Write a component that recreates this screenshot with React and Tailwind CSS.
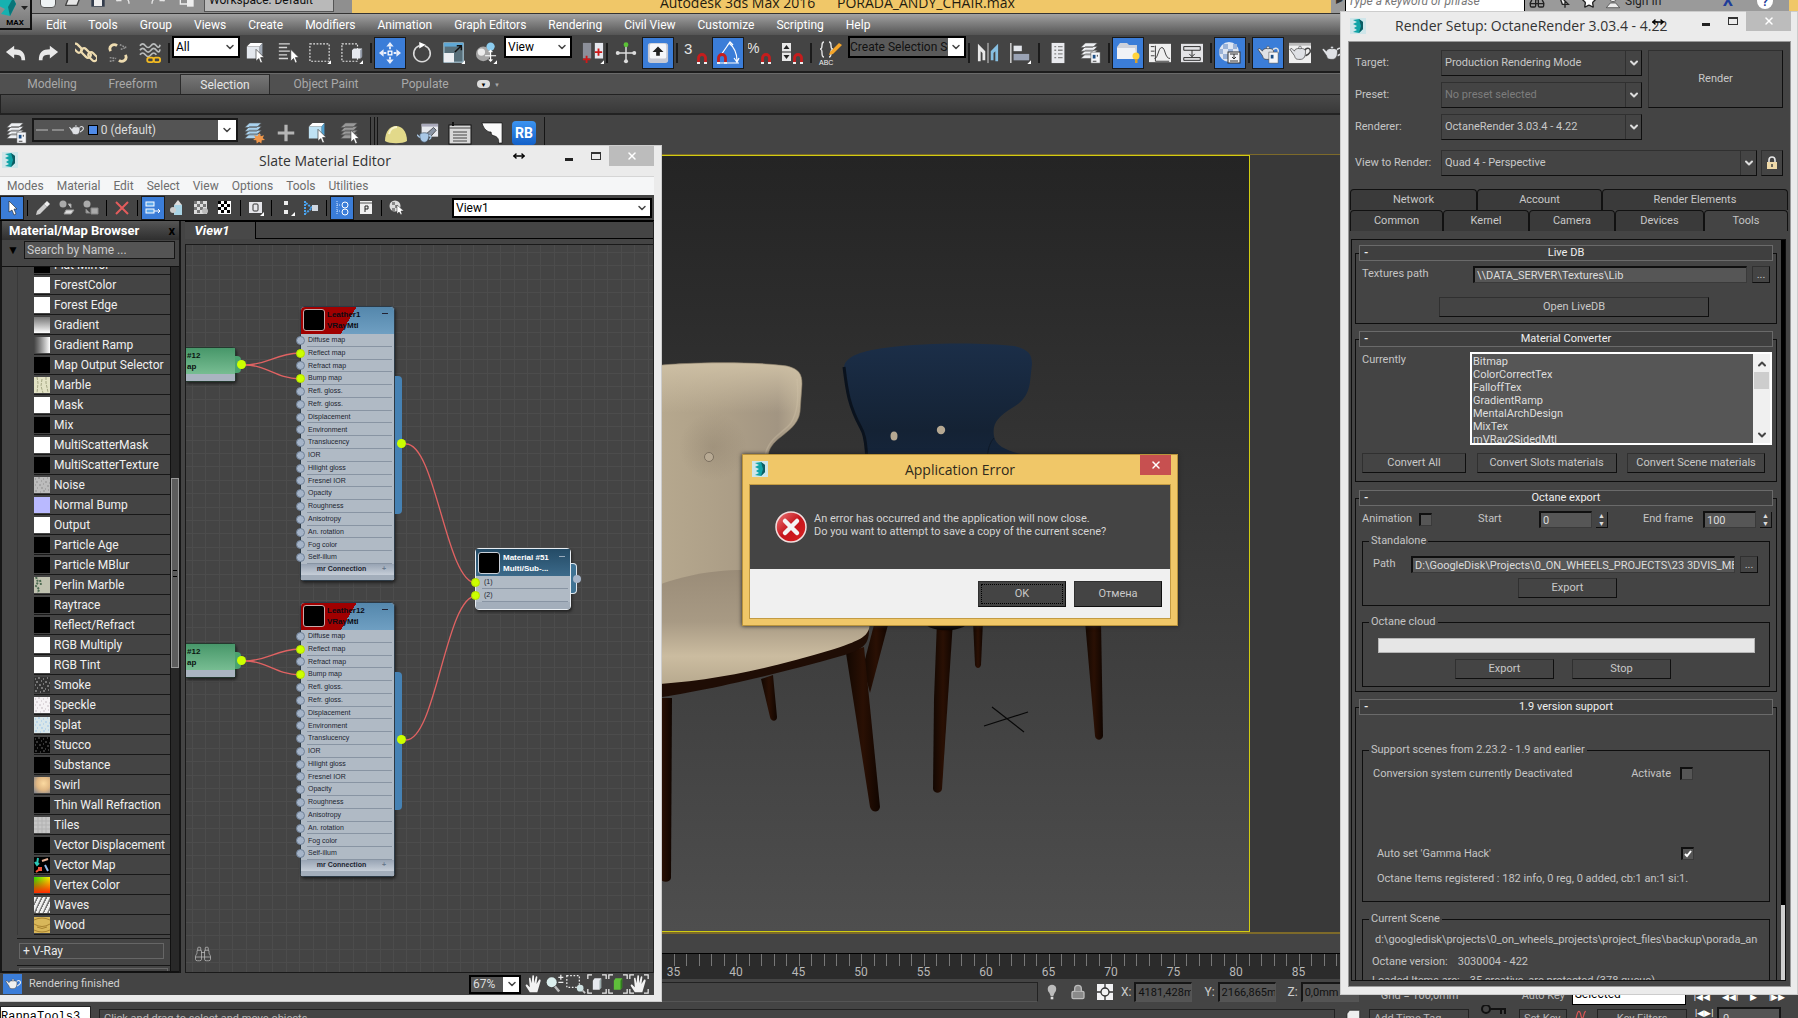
import React from "react";
import { ChevronDown, ChevronUp, Lock, X, Undo, Redo, Binoculars, Star, MoveHorizontal } from "lucide-react";

/* ---------- shared icons ---------- */

const Svg = ({ children, className = "w-[22px] h-[22px]", box = "0 0 24 24" }) => (
  <svg viewBox={box} className={className} fill="none" aria-hidden="true">{children}</svg>
);

const MaxLogo = ({ className = "w-4 h-4" }) => (
  <Svg className={className} box="0 0 16 16">
    <rect width="16" height="16" fill="#cfe6ea" />
    <path d="M3 2l6-1 4 3v7l-4 4-6-1 4-2-3-2 3-2-4-2 4-2z" fill="#11a3a6" />
    <path d="M9 1l4 3v7l-4 4 2-7z" fill="#0b5c63" />
  </Svg>
);

const Arrow = ({ flip }) => (
  <Svg>
    <g transform={flip ? "translate(24 0) scale(-1 1)" : undefined}>
      <path d="M1 11l9-7v4c8 0 12 3 12 12h-4c0-5-2-6-8-6v4z" fill="#e8e8e8" />
    </g>
  </Svg>
);

const Chain = ({ broken }) => (
  <Svg>
    {broken ? (
      <g stroke="#eedcb0" strokeWidth="3">
        <path d="M4 10c-3-5 3-9 7-6M20 14c3 5-3 9-7 6" />
        <path d="M14 3l7 3M15 8l6-2M3 17l7 1M3 21l6-1" stroke="#999" strokeWidth="1.5" strokeDasharray="2 1" />
      </g>
    ) : (
      <g stroke="#eedcb0" strokeWidth="2.4">
        <rect x="-1" y="5" width="11" height="6" rx="3" transform="rotate(45 5 5)" />
        <rect x="6" y="9" width="12" height="6" rx="3" transform="rotate(45 12 12)" />
        <rect x="13" y="13" width="11" height="6" rx="3" transform="rotate(45 19 17)" />
      </g>
    )}
  </Svg>
);

const Waves = () => (
  <Svg>
    <path d="M1 4q3-4 6 0t6 0t6 0t4-1M1 9q3-4 6 0t6 0t6 0t4-1M1 14q3-4 6 0t6 0t6 0" stroke="#b9bcbc" strokeWidth="1.8" />
    <rect x="9" y="17" width="7" height="5" rx="2" stroke="#f3bb22" strokeWidth="2" />
    <rect x="16" y="17" width="7" height="5" rx="2" stroke="#f3bb22" strokeWidth="2" />
  </Svg>
);

const Cursor = ({ x = 10, y = 9 }) => (
  <path transform={`translate(${x} ${y})`} d="M0 0v13l3-3 2 5 2-1-2-5h4z" fill="#fff" stroke="#333" strokeWidth=".7" />
);

const CubeArrow = ({ tint = "#e4e8ee", side = "#9fa8b4" }) => (
  <Svg>
    <path d="M2 5l4-4h13l-3 4z" fill="#fff" />
    <path d="M2 5h14v13H2z" fill={tint} />
    <path d="M16 5l3-4v13l-3 4z" fill={side} />
    <Cursor x={12} y={8} />
  </Svg>
);

const ListArrow = () => (
  <Svg>
    <path d="M2 2h12M2 6h9M2 10h12M2 14h9M2 18h10" stroke="#d5d5d5" strokeWidth="1.5" />
    <Cursor x={15} y={8} />
  </Svg>
);

const Region = ({ cube }) => (
  <Svg>
    <rect x="1" y="2" width={cube ? 17 : 21} height="19" stroke="#e6e6e6" strokeDasharray="2 1.6" strokeWidth="1.3" />
    {cube && <path d="M12 9l2-2h9v9l-2 2h-9z" fill="#e6e9ef" />}
    {cube && <path d="M21 9l2-2v9l-2 2z" fill="#8e96a4" />}
    <path d="M24 20v4h-4z" fill="#fff" />
  </Svg>
);

const MoveIcon = () => (
  <Svg>
    <path d="M12 0l4 5H8zM12 24l4-5H8zM0 12l5-4v8zM24 12l-5-4v8z" fill="#e8eefb" />
    <path d="M11 5h2v3h-2zM11 16h2v3h-2zM5 11h3v2H5zM16 11h3v2h-3z" fill="#e8eefb" />
    <rect x="10" y="10" width="4" height="4" stroke="#fff" strokeWidth="1.4" />
  </Svg>
);

const RotateIcon = () => (
  <Svg>
    <path d="M9 4a9 9 0 1 0 6 0" stroke="#dcdcdc" strokeWidth="1.7" />
    <path d="M9 0l7 3-7 4z" fill="#fff" />
  </Svg>
);

const ScaleIcon = () => (
  <Svg>
    <rect x="1" y="1" width="21" height="21" stroke="#bfe3f5" fill="#7fbfe0" fillOpacity=".35" />
    <rect x="1" y="1" width="21" height="4" fill="#5fa8d6" />
    <rect x="1" y="12" width="11" height="10" fill="#eceef2" />
    <path d="M13 11l7-7M15 4h5v5" stroke="#111" strokeWidth="1.6" />
    <path d="M24 20v4h-4z" fill="#fff" />
  </Svg>
);

const PlaceIcon = () => (
  <Svg>
    <circle cx="9" cy="13" r="8" fill="#a5a5a5" />
    <circle cx="7" cy="11" r="4" fill="#ececec" />
    <circle cx="17" cy="5" r="4.5" fill="#8ccdf0" />
    <path d="M17 9v12M11 15h12M15 11l2-2 2 2M15 19l2 2 2-2" stroke="#fff" strokeWidth="1.3" />
    <path d="M24 20v4h-4z" fill="#fff" />
  </Svg>
);

const PivotIcon = () => (
  <Svg>
    <rect x="1" y="1" width="9" height="17" fill="#8c8f99" />
    <rect x="14" y="1" width="9" height="17" fill="#e5e7ee" />
    <path d="M5 15v8M1 19h8M18 7v8M14 11h8" stroke="#d01818" strokeWidth="2" />
    <path d="M24 20v4h-4z" fill="#fff" />
  </Svg>
);

const ManipIcon = () => (
  <Svg>
    <path d="M12 3v18M3 12h18" stroke="#ddd" strokeWidth="1.6" />
    <circle cx="12" cy="3" r="2.6" fill="#5bc236" />
    <circle cx="3" cy="12" r="2.2" fill="#ddd" />
    <circle cx="21" cy="12" r="2.2" fill="#ddd" />
    <circle cx="12" cy="21" r="2.2" fill="#ddd" />
  </Svg>
);

const KeyUpIcon = () => (
  <Svg>
    <rect x="1" y="1" width="22" height="22" rx="3" fill="#c6c9d4" />
    <rect x="3" y="2" width="18" height="16" rx="2" fill="#f5f6fa" />
    <path d="M12 5l6 6h-4v4h-4v-4H6z" fill="#222" />
  </Svg>
);

const Magnet = ({ x = 11, y = 12 }) => (
  <g transform={`translate(${x} ${y})`}>
    <path d="M1.5 10V5a3.5 3.5 0 0 1 7 0v5" stroke="#c51d1d" strokeWidth="2.8" />
    <path d="M0 9h3v2H0zM7 9h3v2H7z" fill="#eee" />
  </g>
);

const Snap = ({ kind }) => (
  <Svg className="w-[24px] h-[24px]">
    {kind === "3" && <text x="0" y="13" fontSize="15" fill="#e5e5e5" fontFamily="Liberation Sans">3</text>}
    {kind === "%" && <text x="-1" y="12" fontSize="14" fill="#e5e5e5" fontFamily="Liberation Sans">%</text>}
    {kind === "angle" && <path d="M3 22h20M5 14L14 1M13 2c5 4 8 10 8 18M11 5l3-4 3 3M18 17l3 4 2-4" stroke="#fff" strokeWidth="1.2" />}
    {kind === "spin" && <g><rect x="2" y="2" width="9" height="18" fill="#e8e8e8" /><path d="M6.500 4l3 4h-6zM6.500 18l3-4h-6z" fill="#222" /><path d="M2 11h9" stroke="#222" /></g>}
    <Magnet x={kind === "angle" ? 1 : 13} />
  </Svg>
);

const NamedSets = () => (
  <Svg className="w-[24px] h-[24px]">
    <path d="M6 1C2 1 6 8 2 8c4 0 0 8 4 8M11 1c4 0 0 7 4 7-4 0 0 8-4 8" stroke="#e2e2e2" strokeWidth="1.4" />
    <path d="M12 11l9-9 3 2-9 9-4 1z" fill="#f4a52a" />
    <text x="1" y="24" fontSize="7" fill="#eee" fontFamily="Liberation Sans">ABC</text>
  </Svg>
);

const MirrorIcon = () => (
  <Svg>
    <path d="M1 2l8 8v10H6v-8l-2-2v11H1z" fill="#e8e8e8" />
    <path d="M12 1v22" stroke="#ddd" />
    <path d="M23 2l-8 8v10h3v-8l2-2v11h3z" fill="#86bfe2" />
  </Svg>
);

const AlignIcon = () => (
  <Svg>
    <path d="M2 1v22" stroke="#ddd" strokeWidth="1.5" />
    <rect x="5" y="4" width="9" height="6" fill="#e3e6ec" />
    <rect x="5" y="13" width="17" height="7" fill="#9aa3b5" />
    <path d="M24 20v4h-4z" fill="#fff" />
  </Svg>
);

const SheetIcon = () => (
  <Svg>
    <rect x="5" y="1" width="14" height="22" fill="#e9eaee" />
    <path d="M8 5h2M8 9h2M8 13h2M8 17h2M12 5h5M12 9h5M12 13h5M12 17h5" stroke="#888" strokeWidth="1.5" />
  </Svg>
);

const LayersIcon = ({ tint = "#eef0f3", mark = "panel" }) => (
  <Svg>
    <path d="M7 13h13l-5 5H2zM7 9h13l-5 5H2zM7 5h13l-5 5H2zM7 1h13l-5 5H2z" fill={tint} stroke="#555" strokeWidth=".7" />
    {mark === "panel" && <g><rect x="13" y="11" width="10" height="12" fill="#f4f5f8" stroke="#555" strokeWidth=".6" /><rect x="15" y="14" width="3" height="4" fill="#1c4f86" /><path d="M20 14v2M15 21h4" stroke="#333" /></g>}
    {mark === "sun" && <path d="M18 12l1.5 3.500 3.500-1-1.500 3 2.500 2-3.500.500-.500 3.500-2.500-2-2.500 2-.500-3.500-3.500-.500 2.500-2-1.500-3 3.500 1z" fill="#f0974a" />}
    {mark === "cursor" && <Cursor x={13} y={9} />}
  </Svg>
);

const RibbonIcon = () => (
  <Svg className="w-[24px] h-[24px]">
    <path d="M1 6l3-4h7l2 2h8v14H1z" fill="#cdd1db" />
    <path d="M1 7h18l2 11H1z" fill="#f0f2f6" />
    <circle cx="20" cy="15" r="3.5" fill="#ffd33d" />
    <rect x="19" y="18" width="2.5" height="4" fill="#d9a02c" />
  </Svg>
);

const CurveIcon = () => (
  <Svg>
    <rect x="0" y="2" width="24" height="20" fill="#efefef" />
    <path d="M2 5h4M2 10h4M2 15h4M7 4v17h15M6 18c4 0 4-12 8-12s3 12 9 12" stroke="#333" />
  </Svg>
);

const SchematicIcon = () => (
  <Svg>
    <rect x="0" y="2" width="24" height="20" fill="#e3e3e6" />
    <path d="M3 5h18v4H3zM3 17h18v3H3zM12 9v7M9 13l3 3 3-3" stroke="#222" />
  </Svg>
);

const MatIcon = () => (
  <Svg className="w-[24px] h-[24px]">
    <circle cx="11" cy="11" r="10" fill="#dfe6f2" />
    <path d="M5 3h5v5H5zM10 8h5v5h-5zM15 3h4v5h-4zM1 8h4v5H1zM5 13h5v5H5z" fill="#9bb3d8" />
    <rect x="10" y="11" width="12" height="11" fill="#f2f3f6" stroke="#333" />
    <path d="M12 13h8M12 20h8M16 13v5M14 16l2 2 2-2" stroke="#333" />
  </Svg>
);

const Teapot = ({ className = "w-[22px] h-[22px]", fill = "#dfe1e5", panel, frame }) => (
  <Svg className={className}>
    {frame && <rect x="0" y="1" width="24" height="22" fill="#efefef" />}
    {frame && <rect x="0" y="1" width="24" height="3" fill="#bbb" />}
    <path d="M17 9c3-4 7-2 6 2-1 2-3 3-5 4" stroke={frame ? "#444" : fill} strokeWidth="1.6" />
    <path d="M6 10c0-2 2-3 6-3s6 1 6 3c0 5-1 9-6 9s-5-1-6-4l-5-7 2-1z" fill={fill} stroke="#444" strokeWidth=".8" />
    <circle cx="12" cy="6" r="1.5" fill={fill} stroke="#444" strokeWidth=".6" />
    {panel && <g><rect x="13" y="11" width="10" height="12" fill="#f4f5f8" stroke="#555" strokeWidth=".6" /><rect x="15" y="14" width="3" height="4" fill="#1c4f86" /></g>}
  </Svg>
);

const Plus = () => <Svg><path d="M12 3v18M3 12h18" stroke="#b5b5b5" strokeWidth="3.5" /></Svg>;
const Dome = () => <Svg className="w-6 h-6"><path d="M1 20C1 0 23 0 23 20c-4 3-18 3-22 0z" fill="#e2d98a" /><path d="M5 13c1-5 5-7 8-7" stroke="#f8f4cc" strokeWidth="2" /></Svg>;
const RenderWin = () => (
  <Svg>
    <rect x="5" y="2" width="18" height="14" fill="#e7e9ee" /><path d="M5 2h18v3H5z" fill="#aab" />
    <path d="M9 14l9-8 3 3-8 9z" fill="#8a95a5" stroke="#333" strokeWidth=".8" />
    <path d="M3 14c0-3 10-3 10 0s-1 8-5 8-5-4-5-8z" fill="#a9c8e6" stroke="#456" strokeWidth=".8" />
    <path d="M3 17l-3-3M13 15c3-1 3 3 0 4" stroke="#a9c8e6" strokeWidth="1.5" />
  </Svg>
);
const Script = () => <Svg className="w-6 h-6"><rect x="1" y="4" width="22" height="19" fill="#d9d9d9" stroke="#111" /><path d="M1 7h22M5 11h14M5 14h14M5 17h14M5 20h14" stroke="#444" /><path d="M5 1v4" stroke="#111" strokeWidth="2" /></Svg>;
const Corner = () => <Svg><path d="M1 1h22v22h-4c1-4-1-7-5-8-2 0-3-2-3-4C7 11 3 8 1 1z" fill="#fafafa" stroke="#111" strokeWidth=".8" /></Svg>;

const Hand = ({ corners }) => (
  <Svg className="w-5 h-5">
    <path d="M7 22L2 14c0-2 2-2 3 0l2 2L6 6c0-2 2-2 2 0l1 5 1-8c0-2 2-2 2 0v8l2-7c.5-2 2-1 2 0l-1 8 3-5c1-1 2 0 2 1l-4 14z" fill="#f2f2f2" />
    {corners && <path d="M1 6V1h5M18 1h5v5M1 18v5h5M23 18v5h-5" stroke="#eee" strokeWidth="1.5" />}
  </Svg>
);
const ZoomIcon = ({ region }) => (
  <Svg className="w-5 h-5">
    {region ? <g><rect x="1" y="2" width="15" height="14" stroke="#eee" strokeDasharray="2 2" strokeWidth="1.5" /><circle cx="17" cy="17" r="4" fill="#cfe3e3" /><path d="M20 20l3 3" stroke="#ccc" strokeWidth="2" /></g>
      : <g><circle cx="8" cy="10" r="6" fill="#dcefee" /><path d="M12 15l5 6" stroke="#bbb" strokeWidth="3" /><path d="M19 1v6M16 4h6M16 10h6" stroke="#eee" strokeWidth="1.5" /></g>}
  </Svg>
);
const Extents = ({ fill = "#e6e9ef", side = "#9aa" }) => (
  <Svg className="w-5 h-5">
    <path d="M1 6V1h5M18 1h5v5M1 18v5h5M23 18v5h-5" stroke="#eee" strokeWidth="1.5" />
    <path d="M7 8l2-3h8v11l-2 3H7z" fill={fill} /><path d="M15 8l2-3v11l-2 3z" fill={side} />
  </Svg>
);

/* ---------- main toolbar ---------- */

const Sep = () => <span className="mx-[2px] h-5 w-[2px] shrink-0 bg-[#1b1b1b]" />;

const Tool = ({ label, on, narrow, children }) => (
  <button type="button" aria-label={label} className={`flex h-8 shrink-0 items-center justify-center ${narrow ? "w-[22px] overflow-hidden" : "w-8"} ${on ? "border border-[#1a1a1a] bg-[#3b7dd8]" : ""}`}>
    {children}
  </button>
);

const MainSelect = ({ label, value, wide }) => (
  <div className={`relative mb-3 h-[22px] shrink-0 border-2 border-black bg-white ${wide ? "w-[118px]" : "w-[68px]"}`}>
    <select aria-label={label} className={`block h-full appearance-none text-[12px] leading-4 outline-none ${wide ? "w-[98px] bg-[#5a5a5a] pl-0 text-[11px] text-[#111]" : "w-full bg-white pl-[2px] text-black"}`}>
      <option>{value}</option>
    </select>
    <ChevronDown className="pointer-events-none absolute right-[2px] top-[3px] h-3 w-3 text-[#444]" strokeWidth={3} />
  </div>
);

const TitleStrip = () => (
  <header className="flex h-[13px] shrink-0 items-end overflow-hidden bg-[#f0c768]">
    <div className="flex h-[26px] w-[352px] shrink-0 items-center gap-[9px] bg-[#8f8f8f] pl-10 text-[#e6e6e6]">
      <button type="button" aria-label="New" className="h-4 w-4 rounded-sm border border-[#555] bg-[#eef2f4]" />
      <button type="button" aria-label="Open"><Svg className="h-4 w-4"><path d="M1 20L6 7h17l-5 13z" fill="#e6e6e6" stroke="#444" strokeWidth="2" /></Svg></button>
      <button type="button" aria-label="Save"><Svg className="h-4 w-4"><path d="M2 2h20v20H2z" fill="#333c4c" /><path d="M6 12h12v9H6z" fill="#eee" /></Svg></button>
      <button type="button" aria-label="Undo"><Undo className="h-4 w-4" /></button>
      <button type="button" aria-label="Redo" className="ml-[10px]"><Redo className="h-4 w-4" /></button>
      <button type="button" aria-label="Project folder" className="ml-[4px]"><Svg className="h-4 w-4"><path d="M2 2h12v16H2z" stroke="#eee" strokeWidth="2" /><path d="M12 8h10v14H12z" fill="#eee" /></Svg></button>
      <select aria-label="Workspace" className="h-[24px] w-[130px] appearance-none border border-[#555] bg-[#b9b9b9] pl-1 text-[12px] text-[#111]">
        <option>Workspace: Default</option>
      </select>
    </div>
    <h1 className="ml-[308px] h-[22px] flex-1 whitespace-pre font-['Open_Sans'] text-[14px] leading-[24px] text-[#1f1b10]">{"Autodesk 3ds Max 2016      PORADA_ANDY_CHAIR.max"}</h1>
    <div className="mr-[9px] flex h-[24px] w-[458px] shrink-0 items-center bg-[#9a9a9a] text-[#222]">
      <span className="ml-[5px] text-[9px] text-[#333]">▶</span>
      <input aria-label="Search" placeholder="Type a keyword or phrase" className="ml-[2px] h-full w-[180px] border border-black bg-white pl-[2px] text-[12px] italic placeholder:text-[#777]" />
      <Binoculars className="ml-1 h-4 w-4" /><Svg className="ml-3 h-4 w-4"><path d="M3 3l14 14H8zM12 12v10M17 5l4-4" stroke="#222" strokeWidth="2" fill="#eee" /></Svg>
      <Star className="ml-2 h-4 w-4 fill-white" />
      <Svg className="ml-2 h-4 w-4"><circle cx="12" cy="8" r="5" fill="#eee" stroke="#333" /><path d="M2 22l6-7h8l6 7z" fill="#eee" stroke="#333" /></Svg>
      <a href="#signin" className="ml-1 text-[12px]">Sign In</a>
      <span className="ml-auto mr-6 font-bold text-[#1f3d99]">X</span>
      <span className="mr-4 grid h-4 w-4 place-items-center rounded-full bg-white text-[12px] font-bold text-[#1f3d99]">?</span>
    </div>
  </header>
);

const menus = ["Edit", "Tools", "Group", "Views", "Create", "Modifiers", "Animation", "Graph Editors", "Rendering", "Civil View", "Customize", "Scripting", "Help"];

const MenuBar = () => (
  <nav className="flex h-[22px] shrink-0 items-center gap-[22px] border-t border-[#333] bg-gradient-to-b from-[#a2a2a2] to-[#555] pl-[46px] text-[12px] text-white">
    {menus.map((m) => <button type="button" key={m} className="leading-4">{m}</button>)}
  </nav>
);

const MainToolbar = () => (
  <div className="flex h-[38px] shrink-0 items-center overflow-hidden border-b-2 border-[#1d1d1d] bg-[#444]">
    <Tool label="Undo"><Arrow /></Tool><Tool label="Redo"><Arrow flip /></Tool><Sep />
    <Tool label="Link"><Chain /></Tool><Tool label="Unlink"><Chain broken /></Tool><Tool label="Bind to space warp"><Waves /></Tool><Sep />
    <MainSelect label="Selection filter" value="All" />
    <Tool label="Select object"><CubeArrow /></Tool><Tool label="Select by name"><ListArrow /></Tool><Tool label="Rectangular region"><Region /></Tool><Tool label="Window crossing"><Region cube /></Tool><Sep />
    <Tool label="Move" on><MoveIcon /></Tool><Tool label="Rotate"><RotateIcon /></Tool><Tool label="Scale"><ScaleIcon /></Tool><Tool label="Place"><PlaceIcon /></Tool>
    <div className="ml-[2px] mr-[10px]"><MainSelect label="Reference coordinates" value="View" /></div>
    <Tool label="Pivot center" narrow><PivotIcon /></Tool><Sep />
    <Tool label="Manipulate"><ManipIcon /></Tool><Tool label="Keyboard override" on><KeyUpIcon /></Tool><Sep />
    <Tool label="Snaps"><Snap kind="3" /></Tool><Tool label="Angle snap" on><Snap kind="angle" /></Tool><Tool label="Percent snap"><Snap kind="%" /></Tool><Tool label="Spinner snap"><Snap kind="spin" /></Tool><Sep />
    <Tool label="Edit named sets"><NamedSets /></Tool>
    <div className="ml-[2px]"><MainSelect label="Named selection sets" value="Create Selection Se" wide /></div><Sep />
    <Tool label="Mirror"><MirrorIcon /></Tool><Tool label="Align"><AlignIcon /></Tool><Sep />
    <Tool label="Scene explorer"><SheetIcon /></Tool><Tool label="Layer explorer"><LayersIcon /></Tool><Sep />
    <Tool label="Toggle ribbon" on><RibbonIcon /></Tool><Tool label="Curve editor"><CurveIcon /></Tool><Tool label="Schematic view"><SchematicIcon /></Tool><Sep />
    <Tool label="Material editor" on><MatIcon /></Tool><Sep />
    <Tool label="Render setup" on><Teapot panel /></Tool><Tool label="Rendered frame"><Teapot frame /></Tool><Tool label="Render"><Teapot /></Tool>
  </div>
);

const RibbonTabs = () => (
  <div className="shrink-0 border-b border-[#222] bg-[#505050]">
    <div className="flex h-[21px] items-stretch border-t border-[#6a6a6a] text-[12px] text-[#a9a9a9]">
      <button type="button" className="ml-[26px] w-[52px]">Modeling</button>
      <button type="button" className="ml-[30px] w-[50px]">Freeform</button>
      <button type="button" className="ml-[22px] w-[90px] border border-b-0 border-[#2a2a2a] bg-gradient-to-b from-[#777] to-[#5a5a5a] text-[#e6e6e6]">Selection</button>
      <button type="button" className="ml-[20px] w-[72px] whitespace-nowrap">Object Paint</button>
      <button type="button" className="ml-[38px] w-[50px]">Populate</button>
      <span className="ml-[27px] flex items-center gap-1"><span className="grid h-2 w-[13px] place-items-center rounded-sm bg-[#ddd] text-[6px] text-black">▼</span><span className="text-[6px]">▼</span></span>
    </div>
    <div className="h-[20px] border border-[#222] bg-gradient-to-b from-[#4a4a4a] to-[#393939]" />
  </div>
);

const LayerBar = () => (
  <div className="flex h-[39px] shrink-0 items-start bg-[#444] pt-[2px]">
    <Tool label="Layer manager"><LayersIcon /></Tool>
    <div className="mt-px flex h-[24px] w-[206px] items-center border-2 border-[#181818] bg-[#545454] pl-[2px] text-[12px] text-[#ddd]">
      <span className="h-[2px] w-3 bg-[#888]" /><span className="ml-1 h-[2px] w-3 bg-[#888]" />
      <Teapot className="ml-1 h-4 w-4" />
      <span className="ml-[4px] mr-[3px] h-[10px] w-[10px] border border-black bg-[#4f8ae8]" />
      <select aria-label="Layer" className="w-[118px] appearance-none bg-transparent outline-none"><option>0 (default)</option></select>
      <span className="ml-auto grid h-full w-[18px] place-items-center bg-white"><ChevronDown className="h-3 w-3 text-[#444]" strokeWidth={3} /></span>
    </div>
    <Tool label="New layer"><LayersIcon tint="#a9d2ee" mark="sun" /></Tool><Tool label="Add to layer"><Plus /></Tool><Tool label="Select layer objects"><CubeArrow tint="#bfe2f4" side="#4f9fce" /></Tool><Tool label="Set layer"><LayersIcon tint="#999" mark="cursor" /></Tool>
    <span className="ml-1 h-8 w-px bg-[#151515]" /><span className="ml-[3px] h-8 w-px bg-[#151515]" /><span className="ml-[2px] mr-[2px] h-8 w-px bg-[#151515]" />
    <Tool label="Dome"><Dome /></Tool><Tool label="Render window"><RenderWin /></Tool><Tool label="Script"><Script /></Tool><Tool label="Corner"><Corner /></Tool>
    <Tool label="RB"><span className="grid h-6 w-6 place-items-center rounded bg-gradient-to-b from-[#3c94f0] to-[#1260c8] text-[14px] font-bold text-white">RB</span></Tool>
    <span className="ml-1 h-8 w-px bg-[#151515]" />
  </div>
);

/* ---------- viewport ---------- */

const ChairScene = () => (
  <svg viewBox="0 155 1250 777" preserveAspectRatio="xMinYMin meet" className="block w-[1250px]" aria-label="Perspective viewport">
    <defs>
      <linearGradient id="beige" x1="0" y1="0" x2="1" y2="0"><stop offset="0" stopColor="#b9ab90" /><stop offset=".55" stopColor="#ac9e87" /><stop offset=".85" stopColor="#a29582" /><stop offset="1" stopColor="#bcae95" /></linearGradient>
      <linearGradient id="beigeTop" x1="0" y1="0" x2="0" y2="1"><stop offset="0" stopColor="#cdbfa4" /><stop offset=".2" stopColor="#cdbfa4" stopOpacity="0" /></linearGradient>
      <linearGradient id="seat" x1="0" y1="0" x2="0" y2="1"><stop offset="0" stopColor="#9a8c78" /><stop offset=".45" stopColor="#a89a84" /><stop offset=".75" stopColor="#cbbca0" /><stop offset="1" stopColor="#b7a98e" /></linearGradient>
      <linearGradient id="navy" x1="0" y1="0" x2="0" y2="1"><stop offset="0" stopColor="#1b2e48" /><stop offset=".6" stopColor="#142234" /><stop offset="1" stopColor="#162842" /></linearGradient>
      <linearGradient id="leg" x1="0" y1="0" x2="1" y2="0"><stop offset="0" stopColor="#120701" /><stop offset=".5" stopColor="#2a1004" /><stop offset="1" stopColor="#100500" /></linearGradient>
      <radialGradient id="dimple"><stop offset="0" stopColor="#6f6252" stopOpacity=".22" /><stop offset="1" stopColor="#6f6252" stopOpacity="0" /></radialGradient>
    </defs>
    <g fill="url(#leg)">
      <path d="M874 620h14l-19 72-7-26z" />
      <path d="M936 620h16l-11 168c-1 5-8 5-9 0l1-90z" />
      <path d="M972 620h10l-2 44c-1 4-5 4-6 0z" />
      <path d="M1084 620h16l2 115c-1 5-7 5-8 0z" />
      <path d="M760 678l12-4 4 42c0 5-6 5-7 0z" />
      <path d="M650 697h21l-1 180c-1 5-9 5-12 0z" />
      <path d="M845 652l18-6 16 160c-1 6-8 6-10 0z" />
      <path d="M925 624h40c-6 6-30 8-40 0z" fill="#0c0704" />
    </g>
    <path d="M640 699c50-6 130-24 200-44 20-6 28-10 28-26l-6-9-222 62z" fill="#1f0d05" />
    <path d="M640 366c40-5 110-6 146-1 12 3 15 8 15 18l-2 28c-2 14-14 20-24 29-8 8-8 12-8 22v150H640z" fill="url(#beige)" />
    <path d="M640 366c40-5 110-6 146-1 12 3 15 8 15 18l-2 28c-2 14-14 20-24 29-8 8-8 12-8 22v150H640z" fill="url(#beigeTop)" stroke="#877b68" strokeOpacity=".6" />
    <path d="M796 378c2 22 0 34-6 44-8 10-24 16-26 34" stroke="#d0c3aa" strokeOpacity=".35" strokeWidth="1.5" fill="none" />
    <path d="M640 592c30-16 70-24 110-23l118 50c3 16-8 20-38 30-60 18-120 32-190 35z" fill="url(#seat)" />
    <circle cx="712" cy="446" r="34" fill="url(#dimple)" />
    <circle cx="708" cy="456" r="4.5" fill="#b8aa94" stroke="#7c705f" />
    <path d="M843 366c2-12 20-16 40-19 50-6 100-5 130-2 14 3 18 8 18 18l-2 18c-2 14-8 20-18 26-14 9-20 15-18 28 2 14 22 16 40 22v30H866c0-30 0-50-6-60-12-22-14-36-17-61z" fill="url(#navy)" />
    <path d="M843 366c3 25 5 39 17 61 6 10 6 30 6 60" stroke="#0a121d" strokeWidth="3" fill="none" />
    <path d="M993 437c-5 6-7 12-7 30" stroke="#0e1927" fill="none" />
    <ellipse cx="893" cy="435" rx="3.5" ry="4.5" fill="#b5a892" /><circle cx="940" cy="429" r="4.2" fill="#b5a892" />
    <path d="M983 725l44-14M991 706l32 25" stroke="#080808" strokeWidth="1.2" />
  </svg>
);

const Viewport = () => (
  <main className="flex min-h-0 flex-1 border-b-2 border-t border-[#7d6a2a]">
    <div className="min-w-0 flex-1 overflow-hidden border border-[#d0cc12] bg-gradient-to-b from-[#242424] to-[#4e4e4e]"><ChairScene /></div>
    <div className="w-[548px] shrink-0 bg-[#393939]" />
  </main>
);

const Timeline = () => (
  <div className="h-[45px] shrink-0 bg-[#444] pt-[19px]">
    <div className="h-[26px] border-t border-black bg-[#2b2b2b] pl-[236px]">
      <div className="grid w-[1250px] grid-cols-20 text-[12px] text-[#b8b8b8]">
        {Array.from({ length: 20 }, (_, i) => (
          <div key={i} className="relative">
            <div className="grid h-3 grid-cols-5">{[0, 1, 2, 3, 4].map((t) => <span key={t} className="border-l border-[#777]" />)}</div>
            <span className="absolute left-0 top-3 -translate-x-1/2 leading-[13px]">{i * 5}</span>
          </div>
        ))}
      </div>
    </div>
  </div>
);

const Coord = ({ axis, value }) => (
  <label className="flex items-center gap-[3px] text-[12px] text-[#ccc]">{axis}:
    <input defaultValue={value} className="h-[20px] w-[58px] border-2 border-b border-r border-[#161616] border-b-[#555] border-r-[#555] bg-[#545454] pl-[2px] text-[11px] text-[#101010] outline-none" />
  </label>
);

const StatusRows = () => (
  <footer className="flex h-[39px] shrink-0 flex-col overflow-hidden bg-[#444] text-[#bbb]">
    <div className="flex h-[26px] items-center [&>*]:shrink-0">
      <div className="h-5 w-[1038px] border border-[#222] border-b-[#555]" />
      <Svg className="ml-[6px] h-5 w-4"><path d="M12 1c-7 0-8 8-4 12l2 5h4l2-5c4-4 3-12-4-12z" fill="#bbb" /><path d="M10 19h4v4h-4z" fill="#ddd" /></Svg>
      <Lock className="ml-[10px] h-4 w-4 fill-[#8a8a8a]" />
      <Svg className="ml-[11px] h-4 w-4"><rect width="24" height="24" fill="#f2f2f4" /><circle cx="12" cy="12" r="6" stroke="#333" strokeWidth="2" /><path d="M12 0v6M12 18v6M0 12h6M18 12h6" stroke="#333" strokeWidth="2" /></Svg>
      <div className="ml-[8px] flex gap-[12px]"><Coord axis="X" value="4181,428m" /><Coord axis="Y" value="2166,865m" /><Coord axis="Z" value="0,0mm" /></div>
      <div className="ml-[16px] mt-2 w-[104px] whitespace-nowrap pl-[6px] text-[11px] leading-4">Grid = 100,0mm</div>
      <div className="ml-[43px] mt-2 w-[50px] whitespace-nowrap text-[11px] leading-4">Auto Key</div>
      <select aria-label="Key selection" className="mt-1 h-[22px] w-[114px] appearance-none border border-black bg-white pl-[2px] text-[12px] text-black"><option>Selected</option></select>
      <div className="ml-2 mt-3 flex gap-3 text-[9px] text-white"><span>|◀◀</span><span>◀◀|</span><span>▶</span><span>|▶▶</span></div>
    </div>
    <div className="flex h-[14px] items-start text-[11px] [&>*]:shrink-0">
      <input aria-label="MAXScript listener" defaultValue="RappaTools3.·" className="mt-px h-[22px] w-[91px] border border-[#222] bg-white font-['Liberation_Mono'] text-[12px] leading-4 text-black" />
      <p className="ml-[8px] mt-1 h-[20px] w-[1236px] border border-[#222] pl-1 leading-[18px]">Click and drag to select and move objects</p>
      <Svg className="ml-[10px] mt-1 h-4 w-4"><path d="M3 7l4-5h15v15l-4 5H3z" fill="#eee" stroke="#222" /></Svg>
      <span className="ml-[8px] mt-1 w-[100px] border border-[#222] pl-[4px] leading-[18px]">Add Time Tag</span>
      <Svg className="ml-[12px] h-[14px] w-[30px]" box="0 0 30 14"><circle cx="5" cy="4" r="4" stroke="#111" strokeWidth="2" /><path d="M9 4h16M20 4v5M24 4v5" stroke="#111" strokeWidth="2" /></Svg>
      <span className="ml-[8px] mt-1 w-[48px] border border-[#222] pl-1 leading-[18px]">Set Key</span>
      <Svg className="ml-[4px] mt-1 h-[14px] w-[18px]"><path d="M2 22c4 0 4-18 8-18s3 12 6 12 2-12 6-12" stroke="#d55" strokeWidth="2" /></Svg>
      <button type="button" className="ml-[8px] mt-1 w-[90px] border border-[#222] leading-[18px]">Key Filters</button>
      <span className="ml-[8px] mt-[2px] w-[22px] text-[9px] text-white">|◀▶|</span>
      <input aria-label="Current frame" defaultValue="0" className="mt-[2px] h-[22px] w-[64px] border-2 border-[#161616] bg-[#545454] px-1 text-[#ddd]" />
    </div>
  </footer>
);

/* ---------- Slate Material Editor ---------- */

const WindowButtons = ({ className = "" }) => (
  <div className={`flex items-start ${className}`}>
    <button type="button" aria-label="Minimize" className="flex h-5 w-[27px] items-center justify-center pt-[6px]"><span className="h-[3px] w-2 bg-[#222]" /></button>
    <button type="button" aria-label="Maximize" className="flex h-5 w-[27px] items-center justify-center"><span className="h-2 w-[10px] border border-t-2 border-[#333]" /></button>
    <button type="button" aria-label="Close" className="grid h-5 w-[45px] place-items-center bg-[#bcbcbc] text-white"><X className="h-3 w-3" strokeWidth={3} /></button>
  </div>
);

const slateMenus = ["Modes", "Material", "Edit", "Select", "View", "Options", "Tools", "Utilities"];

const maps = [
  ["Flat Mirror", "black"], ["ForestColor", "white"], ["Forest Edge", "white"], ["Gradient", "gradV"], ["Gradient Ramp", "gradH"], ["Map Output Selector", "black"], ["Marble", "marble"], ["Mask", "white"], ["Mix", "black"], ["MultiScatterMask", "white"], ["MultiScatterTexture", "black"], ["Noise", "noise"], ["Normal Bump", "normal"], ["Output", "white"], ["Particle Age", "black"], ["Particle MBlur", "black"], ["Perlin Marble", "perlin"], ["Raytrace", "black"], ["Reflect/Refract", "black"], ["RGB Multiply", "white"], ["RGB Tint", "white"], ["Smoke", "smoke"], ["Speckle", "speckle"], ["Splat", "splat"], ["Stucco", "stucco"], ["Substance", "black"], ["Swirl", "swirl"], ["Thin Wall Refraction", "black"], ["Tiles", "tiles"], ["Vector Displacement", "black"], ["Vector Map", "vector"], ["Vertex Color", "vertex"], ["Waves", "waves"], ["Wood", "wood"],
];

const swatch = {
  black: "bg-black", white: "bg-white", gradV: "bg-gradient-to-b from-[#777] to-white", gradH: "bg-gradient-to-r from-[#444] to-white",
  marble: "bg-[#e2e2c4]", noise: "bg-[#bcbcbc]", normal: "bg-[#b9b9ff]", perlin: "bg-[#c0c2b0]", smoke: "bg-[#333]", speckle: "bg-[#f6f3f5]",
  splat: "bg-[#d8e6e9]", stucco: "bg-[#050505]", swirl: "bg-[radial-gradient(circle_at_60%_40%,#fbd9a0,#e0b783_50%,#7a7f8c)]", tiles: "bg-[#c6c6c6]",
  vector: "bg-black", vertex: "bg-[linear-gradient(to_bottom,transparent,#ff2a00),linear-gradient(to_right,#27e000,#fff000)]",
  waves: "bg-[repeating-linear-gradient(115deg,#eee_0_2px,#777_3px_4px)]", wood: "bg-[#d8b75a]",
};

const Speckles = ({ color }) => (
  <svg viewBox="0 0 16 16" className="h-full w-full"><path d="M1 2h1M4 1h2M9 2h1M13 1h1M2 5h2M7 4h1M11 5h2M15 6h1M1 8h1M5 8h2M9 7h1M13 9h2M3 11h1M7 11h2M11 12h1M1 14h2M6 15h1M9 14h2M14 13h1" stroke={color} strokeWidth="1" /></svg>
);

const Swatch = ({ kind }) => (
  <span className={`block h-4 w-4 shrink-0 ${swatch[kind]}`}>
    {kind === "marble" && <svg viewBox="0 0 16 16"><path d="M3 0l1 6-1 10M8 2l-1 7 2 7M12 0v6l2 9" stroke="#a5a784" fill="none" strokeDasharray="3 1" /></svg>}
    {kind === "noise" && <Speckles color="#8e8e8e" />}
    {kind === "perlin" && <svg viewBox="0 0 16 16"><path d="M2 0l2 5-2 4 3 3-1 4M6 3l1 5" stroke="#4d6b52" fill="none" strokeWidth="2" strokeDasharray="2 1" /></svg>}
    {kind === "smoke" && <Speckles color="#bbb" />}
    {kind === "speckle" && <Speckles color="#c5bcc2" />}
    {kind === "splat" && <Speckles color="#9cc4ea" />}
    {kind === "stucco" && <Speckles color="#666" />}
    {kind === "tiles" && <svg viewBox="0 0 16 16"><path d="M4 0v16M8 0v16M12 0v16M0 4h16M0 8h16M0 12h16" stroke="#b2b2b2" /></svg>}
    {kind === "vector" && <svg viewBox="0 0 16 16" fill="none" strokeWidth="2"><path d="M4 1L3 7M1 5l2 3 2-2" stroke="#2cc7b5" /><path d="M14 2L8 4" stroke="#e8b59a" /><path d="M2 15l5-4M4 11h3v3" stroke="#f0543a" /><path d="M11 8l3 6" stroke="#8fb8e6" /></svg>}
    {kind === "wood" && <svg viewBox="0 0 16 16"><path d="M0 3q8-4 16 0M0 7q8 5 16 0M3 10q5 3 10 0M0 13q8 4 16 0" stroke="#a8822f" fill="none" /></svg>}
  </span>
);

const MiniTool = ({ label, on, children }) => (
  <button type="button" aria-label={label} className={`grid h-6 w-6 shrink-0 place-items-center ${on ? "border border-[#1c1c1c] bg-[#3b7dd8]" : ""}`}>{children}</button>
);
const MiniSep = () => <span className="mx-[3px] h-4 w-px shrink-0 bg-black" />;
const I = ({ children }) => <svg viewBox="0 0 16 16" className="h-4 w-4" fill="none" aria-hidden="true">{children}</svg>;

const Checker = () => <path d="M1 1h3v3H1zM7 1h3v3H7zM4 4h3v3H4zM10 4h3v3h-3zM1 7h3v3H1zM7 7h3v3H7zM4 10h3v3H4zM10 10h3v3h-3z" fill="#777" />;

const SlateToolbar = () => (
  <div className="flex h-[25px] items-center bg-[#444]">
    <MiniTool label="Select tool" on><I><path d="M5 1v11l3-2 2 5 2-1-2-5h3z" fill="#fff" stroke="#222" strokeWidth=".6" /></I></MiniTool><MiniSep />
    <MiniTool label="Pick material"><I><path d="M1 15l1-4 7-7 3 3-7 7z" fill="#ccc" /><path d="M9 4l3-3 3 3-3 3z" fill="#eee" /></I></MiniTool>
    <MiniTool label="Put to scene"><I><circle cx="4" cy="4" r="3.5" fill="#aaa" /><path d="M9 4h3v4M5 14l2-4h8l-3 4z" fill="#ddd" stroke="#999" /></I></MiniTool>
    <MiniTool label="Assign"><I><circle cx="4" cy="4" r="3.5" fill="#aaa" /><path d="M3 9v4h4M8 8h7v6H8z" fill="#aaa" stroke="#888" /></I></MiniTool><MiniSep />
    <MiniTool label="Delete"><I><path d="M2 2l12 12M14 2L2 14" stroke="#e25c5c" strokeWidth="2" /></I></MiniTool><MiniSep />
    <MiniTool label="Move children" on><I><rect x="1" y="2" width="8" height="4" fill="#5ea8ea" stroke="#fff" /><rect x="1" y="9" width="8" height="4" fill="#5ea8ea" stroke="#fff" /><path d="M9 11h6M13 9l2 2-2 2" stroke="#fff" /></I></MiniTool>
    <MiniTool label="Hide unused"><I><path d="M5 5h8v10H5z" fill="#a9d3e4" /><path d="M9 0l4 5H5z" fill="#ddd" /><circle cx="4" cy="10" r="3" fill="#ccc" /></I></MiniTool>
    <MiniTool label="Show shaded"><I><rect x="1" y="1" width="13" height="13" fill="#ddd" /><Checker /><circle cx="12" cy="11" r="3" fill="#bbb" /></I></MiniTool>
    <MiniTool label="Show background"><I><rect x="1" y="1" width="13" height="13" fill="#fff" /><g className="brightness-0"><Checker /></g></I></MiniTool><MiniSep />
    <MiniTool label="Material ID"><I><rect x="1" y="2" width="13" height="11" fill="#e6e6ea" /><rect x="5" y="4" width="5" height="7" rx="1" stroke="#333" /><path d="M16 12v4h-4z" fill="#fff" /></I></MiniTool><MiniSep />
    <MiniTool label="Layout all"><I><path d="M5 1h4v4H5zM5 10h4v4H5z" fill="#eee" /><path d="M16 12v4h-4z" fill="#fff" /></I></MiniTool>
    <MiniTool label="Layout children"><I><path d="M2 1v14M3 3l6 5-6 5" stroke="#4aa3ef" strokeDasharray="2 1" strokeWidth="2" /><path d="M9 5h6v6H9z" fill="#cfd6e0" /></I></MiniTool><MiniSep />
    <MiniTool label="Browser" on><I><path d="M3 1v13M3 5h4M3 11h4" stroke="#cfe3ff" strokeDasharray="1 1" /><circle cx="11" cy="5" r="3" stroke="#fff" /><circle cx="11" cy="12" r="3" stroke="#fff" /></I></MiniTool>
    <MiniTool label="Parameter editor"><I><rect x="2" y="1" width="12" height="13" fill="#efefef" /><path d="M2 3h12" stroke="#555" /><path d="M7 12V6h3v3H7" stroke="#222" /></I></MiniTool><MiniSep />
    <MiniTool label="Select by material"><I><circle cx="6" cy="6" r="5.5" fill="#ddd" /><path d="M3 2h3v3H3zM6 5h3v3H6zM3 8h3v3H3z" fill="#888" /><path d="M8 5v9l2-2 2 3 1-1-1-3h3z" fill="#fff" stroke="#333" strokeWidth=".5" /></I></MiniTool>
    <div className="relative ml-auto mr-[2px] h-[20px] w-[200px] border-2 border-black bg-white">
      <select aria-label="View" className="block h-full w-full appearance-none bg-white pl-[2px] text-[12px] leading-4 text-black"><option>View1</option></select>
      <ChevronDown className="pointer-events-none absolute right-[2px] top-[2px] h-3 w-3 text-[#444]" strokeWidth={3} />
    </div>
  </div>
);

const Browser = () => (
  <aside className="flex w-[181px] shrink-0 flex-col border-x-2 border-[#161616] bg-[#444]">
    <div className="flex h-[19px] shrink-0 items-center justify-between bg-gradient-to-b from-[#555] to-[#2f2f2f] pl-[7px] pr-1 text-[13px] font-bold text-white">
      Material/Map Browser
      <button type="button" aria-label="Close browser" className="leading-3 text-black">x</button>
    </div>
    <div className="flex h-[26px] shrink-0 items-start pt-px">
      <span className="w-[22px] text-center text-[12px] leading-[18px] text-black">▼</span>
      <input aria-label="Search by Name" placeholder="Search by Name ..." className="h-[18px] w-[151px] border border-[#151515] bg-[#545454] px-[2px] text-[12px] text-[#ddd] outline-none placeholder:text-[#ccc]" />
    </div>
    <div className="flex min-h-0 flex-1 border-b-2 border-t border-[#111]">
      <div className="flex min-w-0 flex-1 flex-col overflow-hidden">
        <ul className="-mt-3 ml-[15px] shrink-0 border-l border-[#383838] pl-[16px] text-[12px] text-[#f0f0f0]">
          {maps.map(([name, kind]) => (
            <li key={name} className="flex h-5 items-center gap-1 border-b border-[#181818] whitespace-nowrap"><Swatch kind={kind} />{name}</li>
          ))}
        </ul>
        <div className="ml-[15px] mt-[3px] border-t border-[#181818] pt-1"><button type="button" className="mx-[2px] flex h-4 w-[145px] items-center border border-[#666] pl-[3px] text-[12px] text-[#e8e8e8]">+ V-Ray</button></div>
        <div className="ml-[15px] mt-[6px] border-t border-[#181818] pt-[2px]"><div className="mx-[2px] h-4 border border-[#666]" /></div>
      </div>
      <div className="w-[9px] shrink-0 border-l border-[#111] bg-[#282828] pt-[211px]">
        <div className="grid h-[190px] place-items-center border border-[#999] bg-[#5c5c5c]"><span className="h-[7px] w-1 border-y border-black" /></div>
      </div>
    </div>
  </aside>
);

const slots = ["Diffuse map", "Reflect map", "Refract map", "Bump map", "Refl. gloss.", "Refr. gloss.", "Displacement", "Environment", "Translucency", "IOR", "Hilight gloss", "Fresnel IOR", "Opacity", "Roughness", "Anisotropy", "An. rotation", "Fog color", "Self-illum"];

const Socket = ({ on }) => <span className={`-ml-[5px] h-[9px] w-[9px] shrink-0 rounded-full border ${on ? "border-[#b5dd00] bg-[#ccff00]" : "border-[#6f8096] bg-[#a5b4c8]"}`} />;

const VRayNode = ({ name, className }) => (
  <article className={`absolute w-[95px] rounded-sm border border-[#2c3a46] bg-[#b0bac5] font-['Liberation_Sans'] shadow-[1px_2px_3px_#222] ${className}`}>
    <header className="flex h-[27px] rounded-t-sm bg-[linear-gradient(120deg,#a00000_51%,transparent_51%),linear-gradient(#5487ac,#6f9fc2)] pl-[2px] pt-[2px] text-[8px] font-bold leading-[11px] text-[#0b0b14]">
      <span className="h-[22px] w-[22px] rounded-[3px] border border-[#c9a9a9] bg-black" />
      <span className="ml-[2px] whitespace-nowrap">{name}<br />VRayMtl</span>
      <span className="ml-auto mr-[6px] mt-1 h-px w-[6px] bg-[#223]" />
    </header>
    <ul className="grid h-[230px] grid-rows-[repeat(18,1fr)] text-[7px] text-[#1c2430]">
      {slots.map((s, i) => (
        <li key={s} className="flex items-center"><Socket on={i === 1 || i === 3} /><span className="ml-[2px] mr-[2px] flex h-full flex-1 items-center border-b border-[#8894a3] pl-[1px] pt-[1px]">{s}</span></li>
      ))}
    </ul>
    <div className="flex h-[11px] items-center justify-center bg-gradient-to-b from-[#98a4b4] to-[#c6ced8] text-[7px] font-bold text-[#1c2430]"><span className="flex-1 text-center">mr Connection</span><span className="w-3 text-[#68788c]">+</span></div>
    <div className="h-[5px] bg-[#a3aebb]" />
    <span className="absolute -right-[8px] top-[69px] h-[138px] w-[7px] rounded-r bg-[#4682b4]" />
    <span className="absolute -right-3 top-[132px] h-[9px] w-[9px] rounded-full bg-[#ccff00]" />
  </article>
);

const MapNode = ({ className }) => (
  <article className={`absolute left-0 w-[50px] rounded-r-sm border border-l-0 border-[#24382e] bg-[#aab4c1] font-['Liberation_Sans'] shadow-[1px_2px_3px_#222] ${className}`}>
    <div className="h-[26px] bg-gradient-to-b from-[#47976a] to-[#77bd92] pl-[1px] pt-[2px] text-[8px] font-bold leading-[11px] text-[#0b1410]">#12<br />ap</div>
    <div className="h-[7px] bg-[#aab4c1]" />
    <span className="absolute -right-[6px] top-2 h-[17px] w-[6px] rounded-r bg-[#4aa36f]" />
    <span className="absolute -right-[11px] top-[12px] h-[9px] w-[9px] rounded-full bg-[#ccff00]" />
  </article>
);

const MultiNode = () => (
  <article className="absolute left-[289px] top-[303px] w-[96px] rounded-sm border border-[#e8edf2] bg-[#b0bac5] font-['Liberation_Sans'] shadow-[1px_2px_3px_#222]">
    <header className="flex h-[27px] bg-gradient-to-b from-[#244b66] to-[#3c6a8a] pl-[2px] pt-[3px] text-[8px] font-bold leading-[11px] text-white">
      <span className="h-[22px] w-[22px] rounded-[3px] border border-[#c9d0d9] bg-black" />
      <span className="ml-[3px] whitespace-nowrap">Material #51<br />Multi/Sub-...</span>
      <span className="ml-auto mr-[5px] mt-1 h-px w-[6px] bg-[#9ab]" />
    </header>
    <ul className="text-[7px] text-[#1c2430]">
      {["(1)", "(2)"].map((s) => <li key={s} className="flex h-[13px] items-center"><Socket on /><span className="ml-[2px] mr-[2px] flex h-full flex-1 items-center border-b border-[#8894a3] pl-[2px]">{s}</span></li>)}
    </ul>
    <div className="h-[7px] bg-[#a3aebb]" />
    <span className="absolute -right-[7px] top-[14px] h-[31px] w-[6px] rounded-r border border-l-0 border-[#dfe8ef] bg-[#3f7394]" />
    <span className="absolute -right-[11px] top-[26px] h-2 w-2 rounded-full bg-[#a5b4c8]" />
  </article>
);

const gridLines = [0, 13, 27, 40, 54];

const NodeView = () => (
  <section className="flex min-w-0 flex-1 flex-col border-r border-[#222] bg-[#444] pl-[4px]">
    <div className="flex h-[18px] shrink-0 border-t border-black"><button type="button" className="w-[71px] border-r border-black bg-[#484848] pr-4 text-[13px] font-bold italic leading-4 text-white">View1</button><span className="flex-1 border-b border-black" /></div>
    <div className="relative mt-[5px] min-h-0 flex-1 overflow-hidden border-b border-l border-t border-[#1a1a1a]">
      <svg className="absolute inset-0 h-full w-full" aria-hidden="true">
        <defs>
          <pattern id="canvasGrid" width="67" height="67" x="6" y="7" patternUnits="userSpaceOnUse">
            {gridLines.map((g) => <path key={g} d={`M${g} 0h1v67h-1zM0 ${g}h67v1H0z`} fill="#4c4c4c" />)}
          </pattern>
        </defs>
        <rect width="100%" height="100%" fill="url(#canvasGrid)" />
        <g transform="translate(-186 -245)" fill="none" stroke="#e06262" strokeWidth="1.3">
          <path d="M244 365c24 0 30-11 56-12M244 365c24 0 30 13 56 14" />
          <path d="M244 661c24 0 30-11 56-12M244 661c24 0 30 13 56 14" />
          <path d="M406 444c30 0 40 139 70 139M406 740c30 0 40-144 70-144" />
        </g>
      </svg>
      <MapNode className="top-[102px]" /><MapNode className="top-[398px]" />
      <VRayNode name="Leather1" className="left-[114px] top-[61px]" />
      <VRayNode name="Leather12" className="left-[114px] top-[357px]" />
      <MultiNode />
      <Binoculars className="absolute bottom-[9px] left-2 h-[18px] w-[18px] text-[#bbb]" strokeWidth={1} />
    </div>
  </section>
);

const SlateEditor = () => (
  <section className="absolute bottom-4 left-0 top-[145px] flex w-[662px] flex-col border border-l-0 border-[#ccc] bg-[#ebebeb] pb-[6px] pr-[7px]">
    <header className="flex h-[30px] shrink-0 items-start text-[#333]">
      <MaxLogo className="ml-[2px] mt-[6px] h-4 w-4" />
      <h2 className="ml-[241px] mt-[5px] font-['Open_Sans'] text-[14px] leading-5">Slate Material Editor</h2>
      <MoveHorizontal className="ml-auto mr-[30px] mt-1 h-3 w-3 text-black" strokeWidth={3} />
      <WindowButtons />
    </header>
    <nav className="flex h-[19px] shrink-0 items-center gap-[13px] border-t border-[#d5d5d5] bg-[#f5f6f7] pl-[7px] text-[12px] text-[#6d6d6d]">
      {slateMenus.map((m) => <button type="button" key={m}>{m}</button>)}
    </nav>
    <div className="flex min-h-0 flex-1 flex-col bg-[#444]">
      <SlateToolbar />
      <div className="flex min-h-0 flex-1 border-t border-black"><Browser /><NodeView /></div>
      <footer className="flex h-[22px] shrink-0 items-center text-[12px] text-[#d0d0d0]">
        <button type="button" aria-label="Render map" className="ml-[3px] grid h-5 w-[19px] place-items-center bg-[#3b7dd8]"><Teapot className="h-4 w-4" fill="#f0f0f0" /></button>
        <span className="ml-[7px] text-[11px]">Rendering finished</span>
        <div className="relative ml-auto h-[19px] w-[52px] border-2 border-black bg-white">
          <select aria-label="Zoom" className="block h-full w-[32px] appearance-none bg-[#545454] pl-[2px] text-[12px] leading-[15px] text-[#ddd]"><option>67%</option></select>
          <ChevronDown className="pointer-events-none absolute right-[1px] top-[1px] h-3 w-3 text-[#444]" strokeWidth={3} />
        </div>
        <div className="ml-[3px] mr-[5px] flex gap-[1px]"><Hand /><ZoomIcon /><ZoomIcon region /><Extents /><Extents fill="#5fbf3a" side="#2f7d1c" /><Hand corners /></div>
      </footer>
    </div>
  </section>
);

/* ---------- Render Setup ---------- */

const bevel = "border border-b-[#0f0f0f] border-r-[#0f0f0f] border-l-[#303030] border-t-[#303030]";

const Btn = ({ className = "", children, ...rest }) => (
  <button type="button" className={`${bevel} bg-[#444] text-[#c8c8c8] ${className}`} {...rest}>{children}</button>
);

const Combo = ({ id, value, dim, className = "" }) => (
  <div className={`relative h-[26px] ${bevel} ${className}`}>
    <select id={id} className={`block h-full w-full appearance-none bg-[#444] pl-[3px] outline-none ${dim ? "text-[#7d7d7d]" : "text-[#c8c8c8]"}`}><option>{value}</option></select>
    <span className="pointer-events-none absolute right-0 top-0 grid h-full w-4 place-items-center border-l border-[#303030]"><ChevronDown className="h-3 w-3 text-[#ddd]" strokeWidth={4} /></span>
  </div>
);

const Field = ({ className = "", ...rest }) => (
  <input className={`h-[17px] border-2 border-b border-r border-[#101010] border-b-[#3a3a3a] border-r-[#3a3a3a] bg-[#565656] pl-[2px] text-[#dcdcdc] outline-none ${className}`} {...rest} />
);

const Spin = ({ id, value }) => (
  <span className="flex items-center gap-1">
    <Field id={id} defaultValue={value} className="w-[53px]" />
    <span className="flex h-4 w-3 flex-col border-b border-r border-[#0f0f0f] text-[#ddd]">
      <button type="button" aria-label="Increase" className="flex h-2 items-center justify-center text-[7px] leading-[8px]">▲</button>
      <button type="button" aria-label="Decrease" className="flex h-2 items-center justify-center text-[7px] leading-[8px]">▼</button>
    </span>
  </span>
);

const Check = ({ id, checked }) => (
  <span className="relative grid h-[14px] w-[14px] shrink-0">
    <input id={id} type="checkbox" defaultChecked={checked} className="peer h-[13px] w-[13px] appearance-none border-2 border-b border-r border-[#101010] border-b-[#3a3a3a] border-r-[#3a3a3a] bg-[#565656]" />
    <svg viewBox="0 0 12 12" className="pointer-events-none absolute left-[1px] top-[1px] hidden h-3 w-3 peer-checked:block"><path d="M3 6l2 2 4-5" stroke="#fff" strokeWidth="2" fill="none" /></svg>
  </span>
);

const Rollout = ({ title, className = "", children }) => (
  <section className={`border border-[#0e0e0e] ${className}`}>
    <h3 className="-mt-[9px] mx-[3px]"><button type="button" className="relative block h-4 w-full border border-[#6a6a6a] bg-[#3f3f3f] leading-[14px] text-[#efefef]"><span className="absolute left-1 font-bold">-</span>{title}</button></h3>
    {children}
  </section>
);

const Group = ({ title, className = "", children }) => (
  <fieldset className={`ml-[6px] mr-[6px] min-w-0 border border-[#0e0e0e] ${className}`}>
    <legend className="ml-[6px] px-[2px] leading-[14px]">{title}</legend>
    {children}
  </fieldset>
);

const converters = ["Bitmap", "ColorCorrectTex", "FalloffTex", "GradientRamp", "MentalArchDesign", "MixTex", "mVRay2SidedMtl"];

const tabCls = "h-[21px] rounded-t-sm border border-b-0 border-[#111] bg-[#3a3a3a] text-[#c8c8c8]";

const RenderSetup = () => (
  <section className="absolute right-0 top-[11px] bottom-[23px] flex w-[458px] flex-col border border-[#ccc] bg-[#ebebeb] pb-[7px] pl-[7px] pr-[6px] text-[11px] text-[#c4c4c4]">
    <header className="flex h-[29px] shrink-0 items-start text-[#333]">
      <MaxLogo className="ml-[2px] mt-[6px] h-4 w-4" />
      <h2 className="ml-[29px] mt-[2px] w-[262px] whitespace-nowrap font-['Open_Sans'] text-[14px] leading-6">Render Setup: OctaneRender 3.03.4 - 4.22</h2>
      <MoveHorizontal className="-ml-[5px] mt-1 h-3 w-3 text-black" strokeWidth={3} />
      <WindowButtons className="-mt-px ml-auto" />
    </header>
    <div className="flex min-h-0 flex-1 flex-col border border-[#999] bg-[#444]">
      <div className="grid grid-cols-[86px_1fr_141px] items-center gap-y-[6px] pl-[6px] pr-[7px] pt-2">
        <label htmlFor="target">Target:</label><Combo id="target" value="Production Rendering Mode" />
        <Btn className="row-span-2 h-full w-[135px] justify-self-end">Render</Btn>
        <label htmlFor="preset">Preset:</label><Combo id="preset" value="No preset selected" dim />
        <label htmlFor="renderer">Renderer:</label><Combo id="renderer" value="OctaneRender 3.03.4 - 4.22" />
      </div>
      <div className="mt-[10px] flex items-center pl-[6px] pr-[7px]">
        <label htmlFor="view" className="w-[86px] whitespace-nowrap">View to Render:</label><Combo id="view" value="Quad 4 - Perspective" className="flex-1" />
        <Btn aria-label="Lock view" className="ml-[4px] grid h-[26px] w-[22px] place-items-center">
          <Svg className="h-[14px] w-3" box="0 0 12 14"><path d="M3 6V4a3 3 0 0 1 6 0v2" stroke="#e8e8e8" strokeWidth="1.6" /><path d="M1 6h10v7H1z" fill="#efd9a8" /><path d="M6 8v3" stroke="#444" strokeWidth="1.5" /></Svg>
        </Btn>
      </div>
      <div role="tablist" className="mt-[13px] px-[1px]">
        <div className="grid grid-cols-[127px_125px_1fr] pr-[1px]">{["Network", "Account", "Render Elements"].map((t) => <button type="button" role="tab" key={t} className={tabCls}>{t}</button>)}</div>
        <div className="grid grid-cols-[93px_86px_86px_89px_1fr] pr-[1px]">
          {["Common", "Kernel", "Camera", "Devices"].map((t) => <button type="button" role="tab" key={t} className={`${tabCls} border-b`}>{t}</button>)}
          <button type="button" role="tab" aria-selected="true" className="h-[21px] rounded-t-sm border border-b-0 border-[#111] bg-[#444]">Tools</button>
        </div>
      </div>
      <div className="mb-[5px] ml-[2px] mr-[4px] mt-2 flex min-h-0 flex-1 border border-[#0e0e0e]">
        <div className="min-w-0 flex-1 overflow-hidden pl-[3px] pr-1">
          <Rollout title="Live DB" className="mt-[13px] pb-[6px]">
            <div className="mt-[5px] flex items-center pl-[6px] pr-[6px]"><label htmlFor="tex" className="w-[111px]">Textures path</label><Field id="tex" defaultValue="\\DATA_SERVER\Textures\Lib" className="min-w-0 flex-1" /><Btn aria-label="Browse textures" className="ml-[5px] h-[17px] w-[18px] leading-[12px]">...</Btn></div>
            <Btn className="ml-[83px] mt-[14px] block h-[20px] w-[270px]">Open LiveDB</Btn>
          </Rollout>
          <Rollout title="Material Converter" className="mt-[15px] pb-2">
            <div className="mt-[5px] flex pl-[6px] pr-1"><label htmlFor="conv" className="w-[108px] leading-[15px]">Currently</label>
              <div className="flex h-[93px] min-w-0 flex-1 border-2 border-white bg-[#565656]">
                <select id="conv" size={7} className="h-full min-w-0 flex-1 appearance-none overflow-hidden bg-transparent pt-[1px] leading-[13px] text-[#dedede] outline-none">{converters.map((c) => <option key={c} className="h-[13px] min-h-0 px-[1px] py-0">{c}</option>)}</select>
                <div className="flex w-[17px] shrink-0 flex-col items-center bg-[#f0f0f0] text-[#444]"><ChevronUp className="mt-1 h-3 w-3" strokeWidth={4} /><span className="mt-[2px] h-[17px] w-[15px] bg-[#cdcdcd]" /><ChevronDown className="mb-[2px] mt-auto h-3 w-3" strokeWidth={4} /></div>
              </div>
            </div>
            <div className="mt-2 flex justify-between pl-[6px] pr-[11px]"><Btn className="h-5 w-[104px]">Convert All</Btn><Btn className="h-5 w-[140px]">Convert Slots materials</Btn><Btn className="h-5 w-[138px]">Convert Scene materials</Btn></div>
          </Rollout>
          <Rollout title="Octane export" className="mt-[16px] pb-1">
            <div className="mt-[5px] flex h-[17px] items-center pl-[6px] pr-[4px]"><label htmlFor="anim" className="w-[57px]">Animation</label><Check id="anim" /><label htmlFor="start" className="ml-[45px] w-[61px]">Start</label><Spin id="start" value="0" /><label htmlFor="end" className="ml-auto mr-[10px]">End frame</label><Spin id="end" value="100" /></div>
            <Group title="Standalone" className="mt-[6px] pb-[7px]">
              <div className="mt-2 flex items-center pl-[10px] pr-[11px]"><label htmlFor="path" className="w-[38px]">Path</label><Field id="path" defaultValue="D:\GoogleDisk\Projects\0_ON_WHEELS_PROJECTS\23 3DVIS_MEGA" className="min-w-0 flex-1" /><Btn aria-label="Browse path" className="ml-[5px] h-[17px] w-[18px] leading-[12px]">...</Btn></div>
              <Btn className="ml-[155px] mt-[5px] block h-5 w-[99px]">Export</Btn>
            </Group>
            <Group title="Octane cloud" className="mt-[9px] pb-[7px]">
              <div className="ml-[15px] mr-[14px] mt-[9px] h-[15px] border border-[#b5b5b5] bg-[#e6e6e6]" role="progressbar" aria-label="Cloud progress" />
              <div className="mt-[6px] flex gap-[18px] pl-[92px]"><Btn className="h-5 w-[99px]">Export</Btn><Btn className="h-5 w-[99px]">Stop</Btn></div>
            </Group>
          </Rollout>
          <Rollout title="1.9 version support" className="mt-[15px]">
            <Group title="Support scenes from 2.23.2 - 1.9 and earlier" className="mt-[28px] pb-[14px]">
              <div className="mt-[9px] flex h-4 items-center pl-[10px] pr-[75px]">Conversion system currently Deactivated<label htmlFor="act" className="ml-auto mr-[9px]">Activate</label><Check id="act" /></div>
              <div className="mt-[64px] flex h-4 items-center justify-between pl-[14px] pr-[74px]"><label htmlFor="gamma">Auto set 'Gamma Hack'</label><Check id="gamma" checked /></div>
              <p className="mt-[9px] pl-[14px] leading-4">Octane Items registered : 182 info, 0 reg, 0 added, cb:1 an:1 si:1.</p>
            </Group>
            <Group title="Current Scene" className="mt-[10px]">
              <p className="ml-[12px] mr-[11px] mt-[6px] overflow-hidden whitespace-nowrap leading-4">d:\googledisk\projects\0_on_wheels_projects\project_files\backup\porada_andy_chair</p>
              <p className="mt-[6px] flex gap-[10px] pl-[9px] leading-4"><span>Octane version:</span><span>3030004 - 422</span></p>
              <p className="mt-[3px] flex gap-[10px] pl-[9px] leading-4"><span>Loaded Items are:</span><span>35 creative, are protected (378 queue)</span></p>
            </Group>
          </Rollout>
        </div>
        <div className="flex w-1 shrink-0 flex-col justify-end bg-black"><span className="h-[75px] bg-[#d0d0d0]" /></div>
      </div>
    </div>
  </section>
);

/* ---------- error dialog ---------- */

const ErrorDialog = () => (
  <section role="alertdialog" aria-label="Application Error" className="absolute left-[742px] top-[454px] w-[436px] border border-[#b9933c] bg-[#f0c768] px-[6px] pb-[6px] shadow-[0_0_4px_#222]">
    <header className="relative flex h-[29px] items-center justify-center">
      <span className="absolute left-[3px] top-[6px]"><MaxLogo /></span>
      <h2 className="font-['Open_Sans'] text-[14px] leading-5 text-[#2f2a1c]">Application Error</h2>
      <button type="button" aria-label="Close" className="absolute right-0 top-0 grid h-5 w-[31px] place-items-center bg-[#c75050] text-white"><X className="h-3 w-3" strokeWidth={3} /></button>
    </header>
    <div className="border border-[#c39b43] bg-[#f0f0f0]">
      <div className="flex h-[84px] bg-[#444] pl-[25px] pt-[26px]">
        <svg viewBox="0 0 32 32" className="h-8 w-8" aria-hidden="true">
          <defs><linearGradient id="err" x1="0" y1="0" x2="1" y2="1"><stop offset="0" stopColor="#ef7d7d" /><stop offset=".5" stopColor="#c4141b" /><stop offset="1" stopColor="#d22" /></linearGradient></defs>
          <circle cx="16" cy="16" r="15" fill="url(#err)" stroke="#f2dede" strokeWidth="1.5" />
          <path d="M10 10l12 12M22 10L10 22" stroke="#f4f4f4" strokeWidth="4.5" strokeLinecap="round" />
        </svg>
        <p className="ml-[7px] mt-[1px] text-[11px] leading-[13px] text-[#d4d4d4]">An error has occurred and the application will now close.<br />Do you want to attempt to save a copy of the current scene?</p>
      </div>
      <div className="flex h-[49px] items-start justify-end gap-2 pr-2 pt-3 text-[11px]">
        <Btn className="h-[26px] w-[88px] p-[2px]"><span className="grid h-full place-items-center border border-dotted border-black">OK</span></Btn>
        <Btn className="h-[26px] w-[88px]">Отмена</Btn>
      </div>
    </div>
  </section>
);

export default function App() {
  return (
    <div className="relative flex h-screen flex-col overflow-hidden bg-[#444] font-['Roboto','Open_Sans',sans-serif]">
      <TitleStrip />
      <MenuBar />
      <MainToolbar />
      <RibbonTabs />
      <LayerBar />
      <Viewport />
      <Timeline />
      <StatusRows />
      <button type="button" className="absolute left-0 top-0 flex h-[30px] w-8 flex-col items-center justify-end overflow-hidden border-b-2 border-r-2 border-[#111] bg-gradient-to-b from-[#999] to-[#777]">
        <svg viewBox="0 0 32 20" className="h-5 w-8 shrink-0" aria-hidden="true"><path d="M0 0h14l3 6-6 12-9-2 4-5-6-3z" fill="#16b1b0" /><path d="M14 0l3 6-6 12-2-9z" fill="#0a7478" /><path d="M22 8h7l-3.500 4z" fill="#222" /></svg>
        <span className="text-[8px] font-bold leading-[10px] text-black">MAX</span>
      </button>
      <SlateEditor />
      <RenderSetup />
      <ErrorDialog />
    </div>
  );
}
